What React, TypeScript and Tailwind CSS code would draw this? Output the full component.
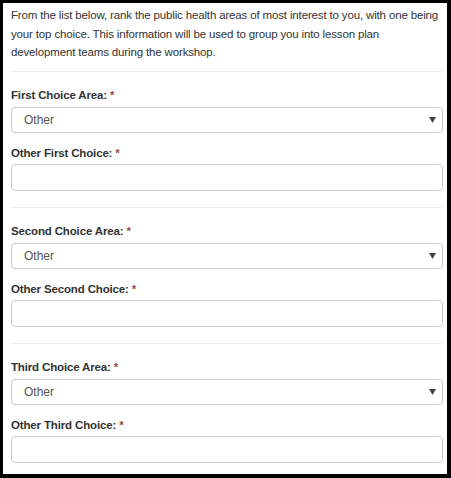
import React from "react";

const font = { fontFamily: '"Liberation Sans", Arial, sans-serif' };

function Label({ text }: { text: string }) {
  return (
    <div className="text-[11.5px] leading-[18px] font-bold text-[#333] tracking-[-0.15px]">
      {text} <span className="text-[#9b4a3e]">*</span>
    </div>
  );
}

function SelectBox() {
  return (
    <div className="h-[26px] border border-[#ccc] rounded-[4px] bg-white flex items-center justify-between pl-[12px] pr-[5px] text-[12px] text-[#555]">
      <span>Other</span>
      <svg width="7" height="6" viewBox="0 0 7 6" className="mr-[1px]">
        <path d="M0 0 H7 L3.5 6 Z" fill="#444" />
      </svg>
    </div>
  );
}

function InputBox() {
  return <div className="h-[27px] border border-[#ccc] rounded-[4px] bg-white" />;
}

function Section({ area, other, last }: { area: string; other: string; last?: boolean }) {
  return (
    <div>
      <Label text={area} />
      <div className="mt-[3px]">
        <SelectBox />
      </div>
      <div className="mt-[11px]">
        <Label text={other} />
      </div>
      <div className="mt-[2px]">
        <InputBox />
      </div>
      {!last && <div className="mt-[16px] mb-[14px] h-px bg-[#eee]" />}
    </div>
  );
}

export default function App() {
  return (
    <div
      className="w-[451px] h-[478px] bg-white border-black border-l-[3px] border-t-[3px] border-r-[4px] border-b-[4px] overflow-hidden"
      style={font}
    >
      <div className="pl-[8px] pr-[4px] pt-[3px]">
        <p className="text-[11.5px] leading-[18.5px] text-[#333] tracking-[-0.15px] whitespace-nowrap">
          From the list below, rank the public health areas of most interest to you, with one being
          <br />
          your top choice. This information will be used to group you into lesson plan
          <br />
          development teams during the workshop.
        </p>
        <div className="mt-[9px] mb-[14px] h-px bg-[#eee]" />
        <Section area="First Choice Area:" other="Other First Choice:" />
        <Section area="Second Choice Area:" other="Other Second Choice:" />
        <Section area="Third Choice Area:" other="Other Third Choice:" last />
      </div>
    </div>
  );
}
